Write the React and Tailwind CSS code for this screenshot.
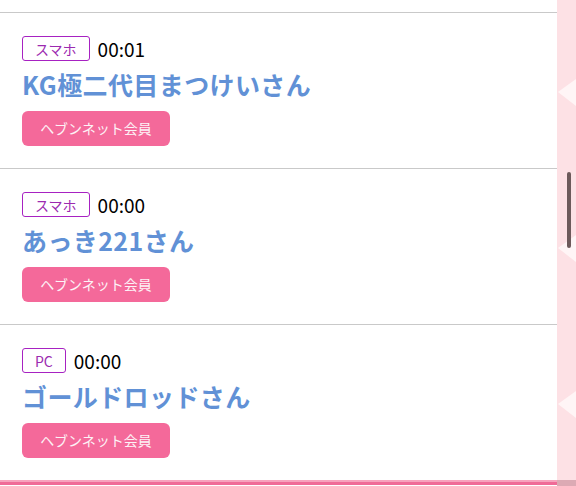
const members = [
  { device: "スマホ", time: "00:01", name: "KG極二代目まつけいさん" },
  { device: "スマホ", time: "00:00", name: "あっき221さん" },
  { device: "PC", time: "00:00", name: "ゴールドロッドさん" },
];

const MemberRow = ({ member }) => (
  <div className="border-t border-[#c9c9c9] pt-[23px] pb-[22px] pl-[22px]">
    <div className="flex items-center h-[25px]">
      <span className="h-[25px] flex items-center px-[12px] border border-[#a722c2] rounded-[3px] text-[14px] text-[#9c2ab0] leading-none">
        {member.device}
      </span>
      <span className="ml-[8px] text-[19px] text-black leading-none">{member.time}</span>
    </div>
    <div className="mt-[5px] text-[25px] leading-[36px] font-bold tracking-[0.4px] text-[#6191d6]">
      {member.name}
    </div>
    <button className="mt-[9px] h-[35px] w-[148px] rounded-[6px] bg-[#f4699a] text-[14px] text-[#fdf2f6] flex items-center justify-center">
      ヘブンネット会員
    </button>
  </div>
);

export default function App() {
  return (
    <div
      className="w-[576px] h-[486px] overflow-hidden flex bg-white"
      style={{ fontFamily: '"Noto Sans CJK JP", "Noto Sans", sans-serif' }}
    >
      <div className="w-[557px] flex flex-col">
        <div className="h-[12px]" />
        {members.map((m, i) => (
          <MemberRow key={i} member={m} />
        ))}
        <div className="h-[5px] border-t-2 border-[#f7a3bd] bg-[#ef6c97]" />
      </div>
      <div className="relative flex-1 bg-[#fde1e5]">
        <svg className="absolute inset-0" width="19" height="486" viewBox="0 0 19 486">
          <polygon points="19,79 1,92 19,106" fill="#fff5f6" />
          <polygon points="19,235 1,248 19,262" fill="#fff5f6" />
          <polygon points="19,391 1,404 19,418" fill="#fff5f6" />
          <rect x="0" y="480" width="19" height="6" fill="#dcaab4" />
        </svg>
        <div className="absolute left-[10px] top-[172px] w-[4px] h-[76px] rounded-full bg-[#6d5a5b]" />
      </div>
    </div>
  );
}
